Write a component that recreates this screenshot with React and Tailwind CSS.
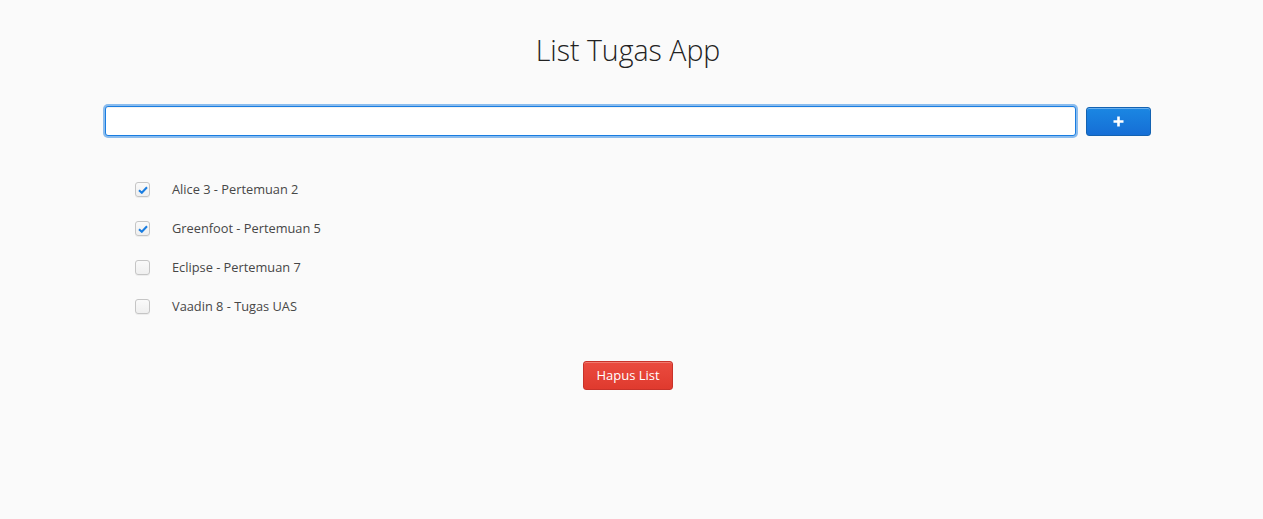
import React, { useState } from 'react';

const initialTasks = [
  { id: 1, name: 'Alice 3 - Pertemuan 2', done: true },
  { id: 2, name: 'Greenfoot - Pertemuan 5', done: true },
  { id: 3, name: 'Eclipse - Pertemuan 7', done: false },
  { id: 4, name: 'Vaadin 8 - Tugas UAS', done: false },
];

const Check = ({ checked, onChange }) => (
  <button
    type="button"
    onClick={onChange}
    className="w-[15px] h-[15px] rounded-[3px] border border-[#c5c5c5] bg-gradient-to-b from-[#fafafa] to-[#efefef] shadow-[0_1px_0_rgba(0,0,0,0.05)] flex items-center justify-center"
  >
    {checked && (
      <svg width="10" height="8" viewBox="0 0 10 8">
        <path d="M1 4.2 L3.8 6.8 L9 1.2" fill="none" stroke="#197de1" strokeWidth="2" />
      </svg>
    )}
  </button>
);

const App = () => {
  const [tasks, setTasks] = useState(initialTasks);
  const [text, setText] = useState('');

  const toggle = id => setTasks(tasks.map(t => (t.id === id ? { ...t, done: !t.done } : t)));

  return (
    <div className="min-h-[519px] bg-[#fafafa] font-['Open_Sans',sans-serif] text-[#474747]">
      <div className="mr-[7px]">
        <h1 className="pt-[28px] text-center text-[28.5px] leading-[44px] font-light text-[#222]">List Tugas App</h1>

        <div className="flex items-center gap-[10px] px-[105px] mt-[34px]">
          <input
            autoFocus
            value={text}
            onChange={e => setText(e.target.value)}
            className="flex-1 h-[30px] rounded-[3px] border border-[#197de1] bg-white px-[7px] text-[13px] outline-none shadow-[0_0_0_2px_rgba(25,125,225,0.5),inset_0_1px_0_rgba(0,0,0,0.05)]"
          />
          <button
            type="button"
            className="w-[65px] h-[29px] rounded-[3px] border border-[#1362b1] bg-gradient-to-b from-[#1b87e3] to-[#166ed5] flex items-center justify-center shadow-[inset_0_1px_0_#6ab0ee]"
          >
            <svg width="11" height="11" viewBox="0 0 11 11">
              <path d="M5.5 0.5 V10.5 M0.5 5.5 H10.5" stroke="white" strokeWidth="2.6" />
            </svg>
          </button>
        </div>

        <ul className="mt-[44px] pl-[135px] flex flex-col gap-[20px]">
          {tasks.map(t => (
            <li key={t.id} className="flex items-center h-[19px]">
              <Check checked={t.done} onChange={() => toggle(t.id)} />
              <span className="ml-[22px] text-[12.8px]">{t.name}</span>
            </li>
          ))}
        </ul>

        <div className="flex justify-center mt-[45px]">
          <button
            type="button"
            className="w-[90px] h-[29px] rounded-[3px] border border-[#c8322a] bg-gradient-to-b from-[#ea4b3f] to-[#e03a2e] text-white text-[13px] shadow-[inset_0_1px_0_#f07a6f]"
          >
            Hapus List
          </button>
        </div>
      </div>
    </div>
  );
};

export default App;
